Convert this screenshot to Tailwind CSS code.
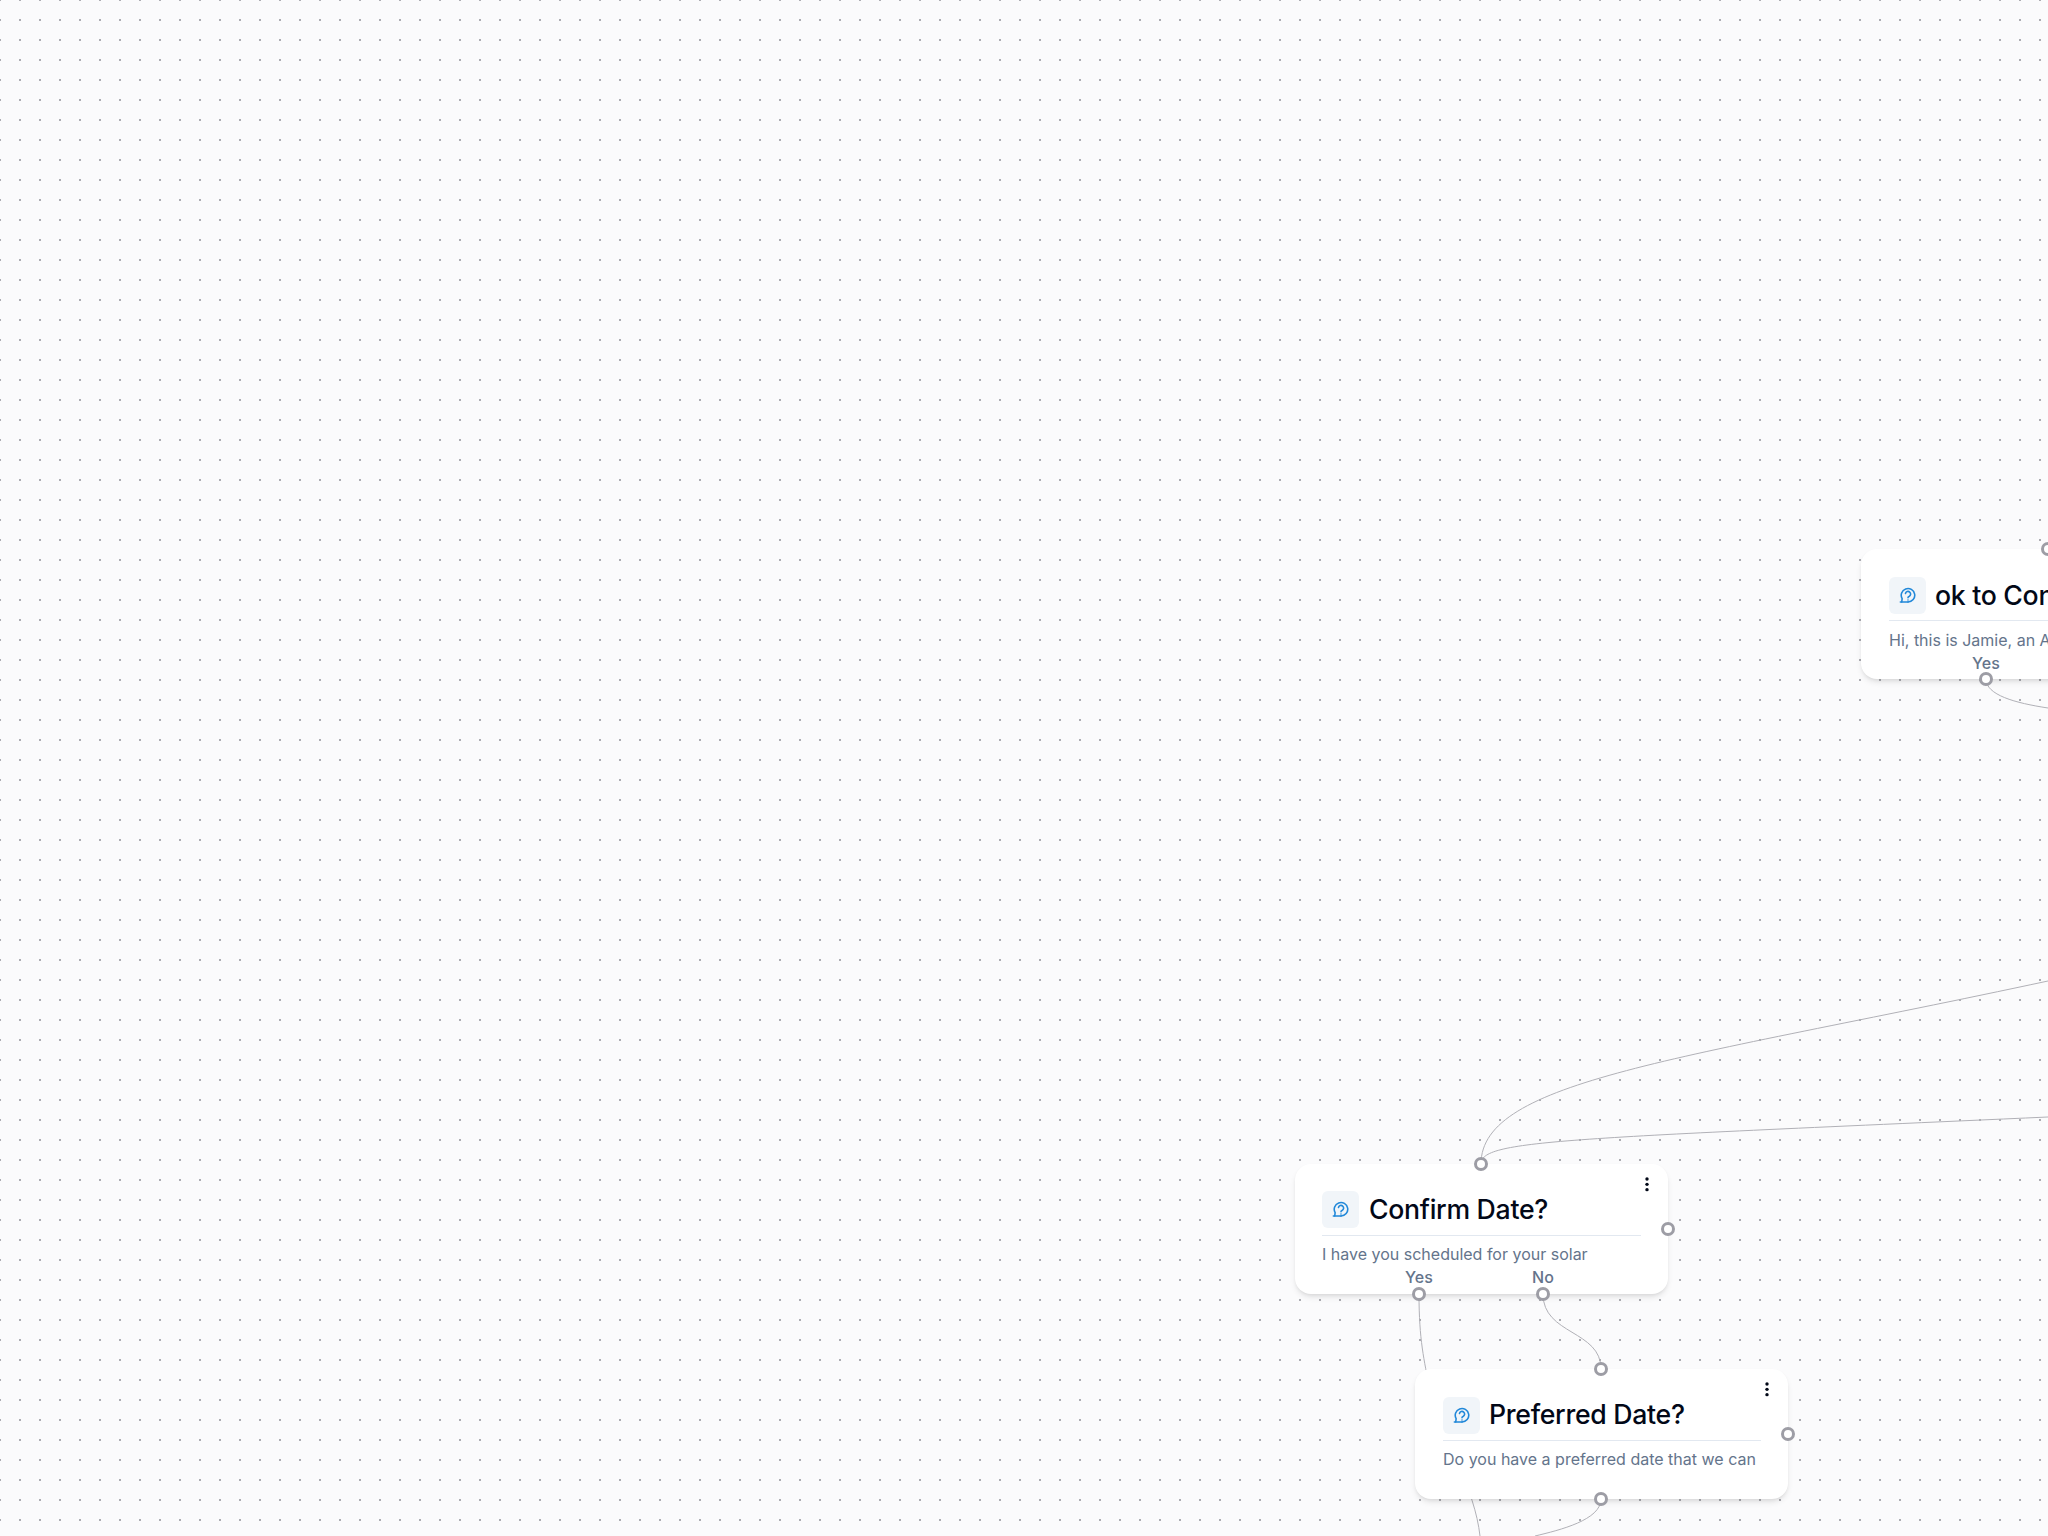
<!doctype html>
<html>
<head>
<meta charset="utf-8">
<script src="https://cdn.jsdelivr.net/npm/@tailwindcss/browser@4"></script>
</head>
<body class="m-0 bg-[#fbfbfc]">
<div class="relative w-[2048px] h-[1536px] overflow-hidden bg-[#fbfbfc] font-['Inter',sans-serif]">
  <svg class="absolute inset-0" width="2048" height="1536">
    <defs><pattern id="dots" x="-1" y="-1" width="20" height="20" patternUnits="userSpaceOnUse"><circle cx="1" cy="1" r="1" fill="#91919a"/></pattern></defs>
    <rect width="2048" height="1536" fill="url(#dots)"/>
  </svg>
  <svg class="absolute inset-0" width="2048" height="1536" fill="none" stroke="#b1b1b7" stroke-width="1">
    <path d="M1481 1164 C1481 1080 1680 1060 2048 981"/>
    <path d="M1481 1164 C1481 1140 1560 1139 2048 1117"/>
    <path d="M1419 1294 C1419 1340 1424 1360 1430 1390 C1445 1440 1475 1490 1480 1536"/>
    <path d="M1543 1294 C1543 1335 1601 1330 1601 1369"/>
    <path d="M1601 1499 C1601 1520 1560 1530 1535 1536"/>
    <path d="M1986 679 C1986 695 2015 703 2048 708"/>
  </svg>

  <!-- ok to Confirm -->
  <div class="absolute left-[1861px] top-[549px] w-[373px] h-[130px] rounded-[16px] bg-white shadow-[0_4px_6px_-1px_rgba(0,0,0,0.1),0_2px_4px_-2px_rgba(0,0,0,0.1)] pl-[28px] pr-[27px] pt-[28px]">
    <div class="flex items-center gap-[9px] h-[37px]">
      <div class="w-[37px] h-[37px] shrink-0 rounded-[6px] bg-[#f1f5f9] flex items-center justify-center">
        <svg width="18" height="18" viewBox="1 0 24 24" fill="none" stroke="#2188d9" stroke-width="2.1" stroke-linecap="round" stroke-linejoin="round"><path d="M13 20A9 9 0 1 0 5.2 15.5L4.6 20H2.8"/><path d="M4.6 20H13"/><path d="M9.6 8.6a3.5 3.5 0 1 1 4.8 4c-.9.4-1.4 1-1.4 1.8"/><path d="M13 17.4v.01"/></svg>
      </div>
      <div class="text-[26.67px] leading-[37px] font-medium tracking-[-0.3px] text-[#020817] whitespace-nowrap">ok to Confirm</div>
    </div>
    <div class="mt-[6px] border-t border-[#e2e8f0] pt-[9px] text-[16px] leading-[20px] text-[#64748b] whitespace-nowrap">Hi, this is Jamie, an AI assistant</div>
    <div class="absolute left-[125px] top-[104px] -translate-x-1/2 text-[16px] leading-[20px] font-medium text-[#64748b]">Yes</div>
    <div class="absolute left-[118px] top-[123px] w-[14px] h-[14px] rounded-full border-[3px] border-[#9d9da5] bg-white"></div>
    <div class="absolute left-[180px] top-[-7px] w-[14px] h-[14px] rounded-full border-[3px] border-[#9d9da5] bg-white"></div>
  </div>

  <!-- Confirm Date? -->
  <div class="absolute left-[1295px] top-[1164px] w-[373px] h-[130px] rounded-[16px] bg-white shadow-[0_4px_6px_-1px_rgba(0,0,0,0.1),0_2px_4px_-2px_rgba(0,0,0,0.1)] px-[27px] pt-[27px]">
    <div class="flex items-center gap-[10px] h-[37px]">
      <div class="w-[37px] h-[37px] shrink-0 rounded-[6px] bg-[#f1f5f9] flex items-center justify-center">
        <svg width="18" height="18" viewBox="1 0 24 24" fill="none" stroke="#2188d9" stroke-width="2.1" stroke-linecap="round" stroke-linejoin="round"><path d="M13 20A9 9 0 1 0 5.2 15.5L4.6 20H2.8"/><path d="M4.6 20H13"/><path d="M9.6 8.6a3.5 3.5 0 1 1 4.8 4c-.9.4-1.4 1-1.4 1.8"/><path d="M13 17.4v.01"/></svg>
      </div>
      <div class="text-[26.67px] leading-[37px] font-medium tracking-[-0.3px] text-[#020817] whitespace-nowrap">Confirm Date?</div>
    </div>
    <div class="mt-[7px] border-t border-[#e2e8f0] pt-[8px] text-[16px] leading-[20px] text-[#64748b] whitespace-nowrap">I have you scheduled for your solar</div>
    <svg class="absolute left-[345px] top-[10px]" width="14" height="20" viewBox="0 0 14 20" fill="#020817"><circle cx="7" cy="5" r="1.7"/><circle cx="7" cy="10.33" r="1.7"/><circle cx="7" cy="15.67" r="1.7"/></svg>
    <div class="absolute left-[124px] top-[103px] -translate-x-1/2 text-[16px] leading-[20px] font-medium text-[#64748b]">Yes</div>
    <div class="absolute left-[248px] top-[103px] -translate-x-1/2 text-[16px] leading-[20px] font-medium text-[#64748b]">No</div>
    <div class="absolute left-[117px] top-[123px] w-[14px] h-[14px] rounded-full border-[3px] border-[#9d9da5] bg-white"></div>
    <div class="absolute left-[241px] top-[123px] w-[14px] h-[14px] rounded-full border-[3px] border-[#9d9da5] bg-white"></div>
    <div class="absolute left-[179px] top-[-7px] w-[14px] h-[14px] rounded-full border-[3px] border-[#9d9da5] bg-white"></div>
    <div class="absolute left-[366px] top-[58px] w-[14px] h-[14px] rounded-full border-[3px] border-[#9d9da5] bg-white"></div>
  </div>

  <!-- Preferred Date? -->
  <div class="absolute left-[1415px] top-[1369px] w-[373px] h-[130px] rounded-[16px] bg-white shadow-[0_4px_6px_-1px_rgba(0,0,0,0.1),0_2px_4px_-2px_rgba(0,0,0,0.1)] pl-[28px] pr-[27px] pt-[28px]">
    <div class="flex items-center gap-[9px] h-[37px]">
      <div class="w-[37px] h-[37px] shrink-0 rounded-[6px] bg-[#f1f5f9] flex items-center justify-center">
        <svg width="18" height="18" viewBox="1 0 24 24" fill="none" stroke="#2188d9" stroke-width="2.1" stroke-linecap="round" stroke-linejoin="round"><path d="M13 20A9 9 0 1 0 5.2 15.5L4.6 20H2.8"/><path d="M4.6 20H13"/><path d="M9.6 8.6a3.5 3.5 0 1 1 4.8 4c-.9.4-1.4 1-1.4 1.8"/><path d="M13 17.4v.01"/></svg>
      </div>
      <div class="mb-[2px] text-[26.67px] leading-[37px] font-medium tracking-[-0.3px] text-[#020817] whitespace-nowrap">Preferred Date?</div>
    </div>
    <div class="mt-[6px] border-t border-[#e2e8f0] pt-[8px] text-[16px] leading-[20px] text-[#64748b] whitespace-nowrap">Do you have a preferred date that we can</div>
    <svg class="absolute left-[345px] top-[10px]" width="14" height="20" viewBox="0 0 14 20" fill="#020817"><circle cx="7" cy="5" r="1.7"/><circle cx="7" cy="10.33" r="1.7"/><circle cx="7" cy="15.67" r="1.7"/></svg>
    <div class="absolute left-[179px] top-[-7px] w-[14px] h-[14px] rounded-full border-[3px] border-[#9d9da5] bg-white"></div>
    <div class="absolute left-[179px] top-[123px] w-[14px] h-[14px] rounded-full border-[3px] border-[#9d9da5] bg-white"></div>
    <div class="absolute left-[366px] top-[58px] w-[14px] h-[14px] rounded-full border-[3px] border-[#9d9da5] bg-white"></div>
  </div>
</div>
</body>
</html>
